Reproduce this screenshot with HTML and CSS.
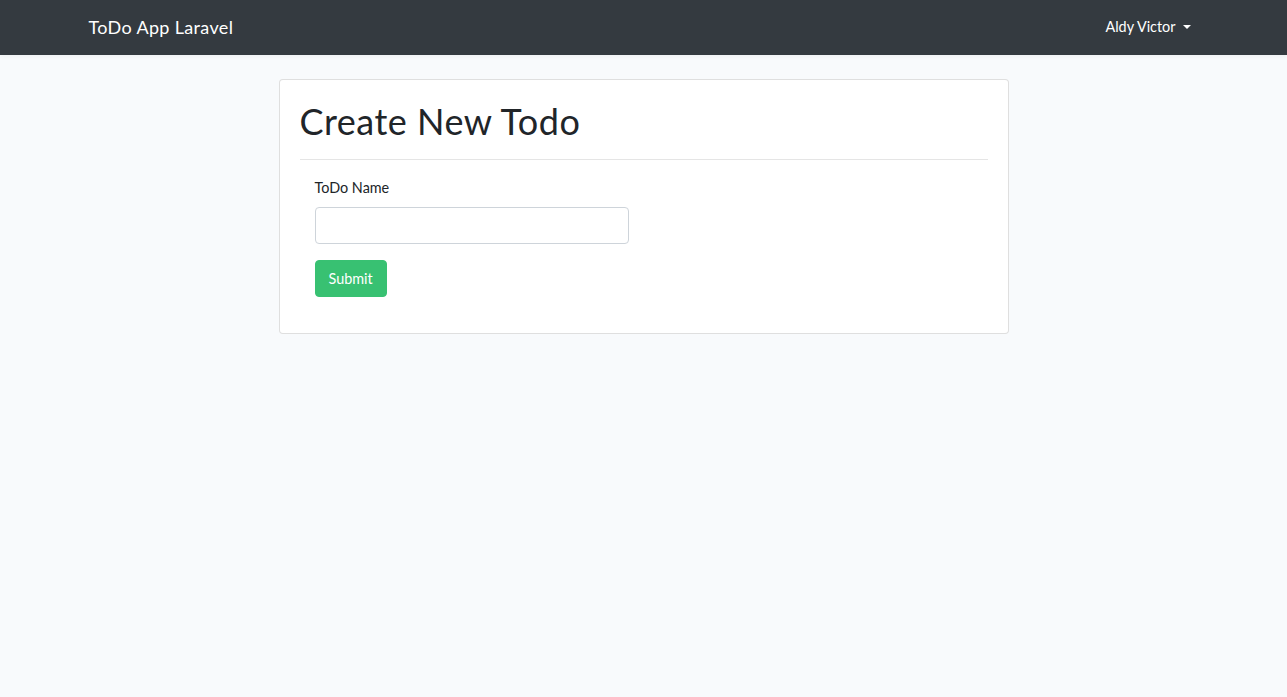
FILE: index.html
```html
<!DOCTYPE html>
<html lang="en">
<head>
<meta charset="utf-8">
<title>ToDo App Laravel</title>
<link rel="stylesheet" href="styles.css">
</head>
<body>
<nav class="navbar">
  <div class="nav-inner">
    <a class="brand" href="#">ToDo App Laravel</a>
    <a class="user" href="#">Aldy Victor <span class="caret"></span></a>
  </div>
</nav>
<main class="main">
  <div class="card">
    <h1 class="title">Create New Todo</h1>
    <hr class="divider">
    <form class="form">
      <div class="form-group">
        <label class="label" for="name">ToDo Name</label>
        <input class="input" id="name" type="text">
      </div>
      <button class="btn" type="button">Submit</button>
    </form>
  </div>
</main>
</body>
</html>
```
FILE: styles.css
```css
* { box-sizing: border-box; }
html, body { margin: 0; padding: 0; }
body {
  font-family: "Lato", "Noto Sans", sans-serif;
  font-size: 14.4px;
  line-height: 1.6;
  color: #212529;
  background: #f8fafc;
  min-height: 697px;
}
.navbar {
  background: #343a40;
  height: 55px;
  box-shadow: 0 2px 4px rgba(0,0,0,.04);
}
.nav-inner {
  width: 1140px;
  margin: 0 auto;
  padding: 0 15px;
  height: 55px;
  display: flex;
  align-items: center;
  justify-content: space-between;
}
.brand {
  color: #fff;
  text-decoration: none;
  font-size: 18px;
  letter-spacing: 0.35px;
  line-height: 1;
  margin-top: -1px;
}
.user {
  color: #fff;
  text-decoration: none;
  font-size: 14.4px;
  padding: 0 8px;
  display: flex;
  align-items: center;
  margin-top: -1px;
}
.caret {
  display: inline-block;
  margin-left: 7px;
  border-top: 4px solid #fff;
  border-left: 4px solid transparent;
  border-right: 4px solid transparent;
}
.main {
  padding-top: 24px;
}
.card {
  width: 730px;
  margin: 0 auto;
  background: #fff;
  border: 1px solid rgba(0,0,0,.125);
  border-radius: 4px;
  padding: 20px 20px 20px;
}
.title {
  margin: 0;
  font-size: 36px;
  font-weight: 400;
  letter-spacing: 0.5px;
  line-height: 1.2;
  color: #212529;
}
.divider {
  margin: 16px 0 16px;
  border: 0;
  border-top: 1px solid rgba(0,0,0,.1);
}
.form {
  padding: 0 15px;
  margin-bottom: 16px;
}
.form-group { margin-bottom: 16px; }
.label {
  display: block;
  margin-bottom: 8px;
  color: #212529;
}
.input {
  display: block;
  width: 314px;
  height: 37px;
  border: 1px solid #ced4da;
  border-radius: 4px;
  padding: 6px 12px;
  font: inherit;
  background: #fff;
}
.btn {
  display: block;
  height: 37px;
  padding: 0 13px;
  background: #38c172;
  border: 1px solid #38c172;
  border-radius: 4px;
  color: #fff;
  font: inherit;
  cursor: pointer;
}
```
